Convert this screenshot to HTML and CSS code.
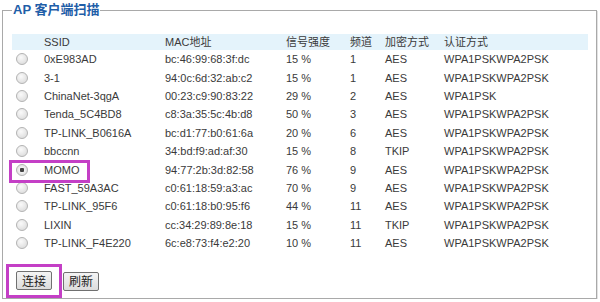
FILE: index.html
```html
<!DOCTYPE html>
<html lang="zh-CN">
<head>
  <meta charset="UTF-8"/>
  <title>AP 客户端扫描</title>
  <link rel="stylesheet" href="styles.css">
</head>
<body>
  <fieldset class="scan">
    <legend>AP 客户端扫描</legend>
    <table class="ap-table">
      <colgroup>
        <col class="c-radio"><col class="c-ssid"><col class="c-mac"><col class="c-sig">
        <col class="c-ch"><col class="c-enc"><col class="c-auth">
      </colgroup>
      <thead>
        <tr><th></th><th>SSID</th><th>MAC地址</th><th>信号强度</th><th>频道</th><th>加密方式</th><th>认证方式</th></tr>
      </thead>
      <tbody>
        <tr><td><input type="radio" name="ap"></td><td>0xE983AD</td><td>bc:46:99:68:3f:dc</td><td>15 %</td><td>1</td><td>AES</td><td>WPA1PSKWPA2PSK</td></tr>
        <tr><td><input type="radio" name="ap"></td><td>3-1</td><td>94:0c:6d:32:ab:c2</td><td>15 %</td><td>1</td><td>AES</td><td>WPA1PSKWPA2PSK</td></tr>
        <tr><td><input type="radio" name="ap"></td><td>ChinaNet-3qgA</td><td>00:23:c9:90:83:22</td><td>29 %</td><td>2</td><td>AES</td><td>WPA1PSK</td></tr>
        <tr><td><input type="radio" name="ap"></td><td>Tenda_5C4BD8</td><td>c8:3a:35:5c:4b:d8</td><td>50 %</td><td>3</td><td>AES</td><td>WPA1PSKWPA2PSK</td></tr>
        <tr><td><input type="radio" name="ap"></td><td>TP-LINK_B0616A</td><td>bc:d1:77:b0:61:6a</td><td>20 %</td><td>6</td><td>AES</td><td>WPA1PSKWPA2PSK</td></tr>
        <tr><td><input type="radio" name="ap"></td><td>bbccnn</td><td>34:bd:f9:ad:af:30</td><td>15 %</td><td>8</td><td>TKIP</td><td>WPA1PSKWPA2PSK</td></tr>
        <tr><td class="marked"><input type="radio" name="ap" checked><span class="mark mark-row"></span></td><td>MOMO</td><td>94:77:2b:3d:82:58</td><td>76 %</td><td>9</td><td>AES</td><td>WPA1PSKWPA2PSK</td></tr>
        <tr><td><input type="radio" name="ap"></td><td>FAST_59A3AC</td><td>c0:61:18:59:a3:ac</td><td>70 %</td><td>9</td><td>AES</td><td>WPA1PSKWPA2PSK</td></tr>
        <tr><td><input type="radio" name="ap"></td><td>TP-LINK_95F6</td><td>c0:61:18:b0:95:f6</td><td>44 %</td><td>11</td><td>AES</td><td>WPA1PSKWPA2PSK</td></tr>
        <tr><td><input type="radio" name="ap"></td><td>LIXIN</td><td>cc:34:29:89:8e:18</td><td>15 %</td><td>11</td><td>TKIP</td><td>WPA1PSKWPA2PSK</td></tr>
        <tr><td><input type="radio" name="ap"></td><td>TP-LINK_F4E220</td><td>6c:e8:73:f4:e2:20</td><td>10 %</td><td>11</td><td>AES</td><td>WPA1PSKWPA2PSK</td></tr>
      </tbody>
    </table>
    <div class="buttons">
      <span class="mark-wrap"><button>连接</button></span>
      <button>刷新</button>
    </div>
  </fieldset>
</body>
</html>
```

FILE: styles.css
```css
:root{
  --text:#3a3a3a; --border:#a9a9a9; --blue:#1f5ea8; --head:#e4f3fb; --mark:#c43fc6;
}
*{box-sizing:border-box;}
body{margin:0;background:#fff;color:var(--text);font-family:"Liberation Sans","Noto Sans CJK SC",sans-serif;font-size:11px;}
.scan{margin:1px 0 0 2px;width:595px;height:298px;border:1px solid var(--border);box-shadow:1px 1px 0 #e2e2e2;padding:15px 7px 0 9px;position:relative;}
.scan legend{font-size:13px;font-weight:bold;color:var(--blue);line-height:18px;padding:0 1px;margin-left:0;}
.ap-table{width:576px;table-layout:fixed;border-collapse:collapse;}
.c-radio{width:32px;} .c-ssid{width:121px;} .c-mac{width:121px;} .c-sig{width:64px;}
.c-ch{width:35px;} .c-enc{width:59px;} .c-auth{width:144px;}
.ap-table th{background:var(--head);font-weight:normal;text-align:left;height:16px;padding:0;line-height:16px;}
.ap-table td{height:18.4px;padding:0;line-height:18px;white-space:nowrap;}
.ap-table input[type=radio]{appearance:none;-webkit-appearance:none;width:12px;height:12px;margin:3px 0 0 4px;border:1px solid #b4b4b4;border-radius:50%;background:radial-gradient(circle at 40% 35%,#fafafa,#d6d6d6);vertical-align:top;}
.ap-table input[type=radio]:checked{background:radial-gradient(circle,#444 0 2px,#f2f2f2 2.5px,#d6d6d6);}
.marked{position:relative;}
.mark{position:absolute;border:3px solid var(--mark);pointer-events:none;}
.mark-row{left:-3px;top:0;width:81px;height:23px;}
.buttons{display:flex;align-items:center;gap:1px;margin:12px 0 0 -6px;}
.mark-wrap{display:inline-flex;border:3px solid var(--mark);padding:4px 7px 5px;}
.buttons button{width:36px;height:19px;padding:0;font-size:12px;font-family:"Noto Sans CJK SC",sans-serif;color:#222;border:1px solid #707070;border-radius:2px;background:linear-gradient(#f4f4f4,#dcdcdc);line-height:16px;}
```
